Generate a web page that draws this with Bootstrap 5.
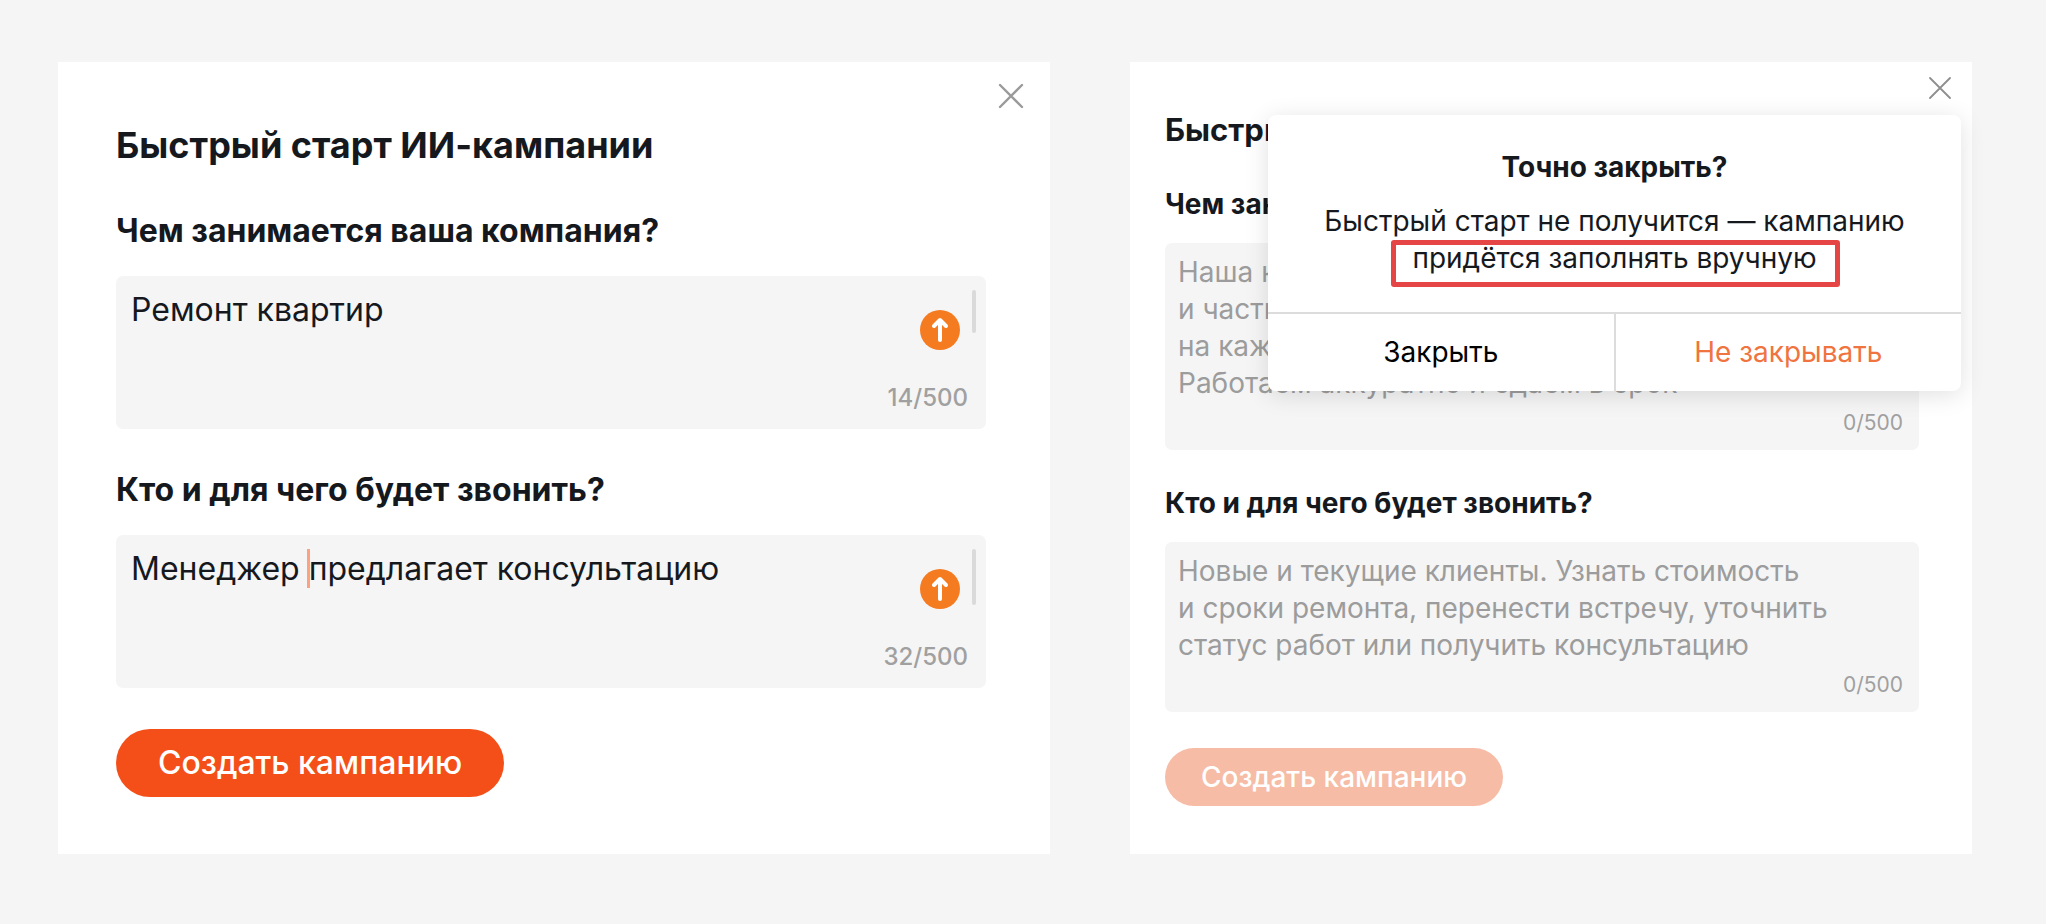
<!DOCTYPE html>
<html lang="ru">
<head>
<meta charset="utf-8">
<meta name="viewport" content="width=device-width, initial-scale=1">
<title>Быстрый старт ИИ-кампании</title>
<link href="https://cdn.jsdelivr.net/npm/bootstrap@5.3.0/dist/css/bootstrap.min.css" rel="stylesheet">
<style>
body { background: #f5f5f5; color: #15191e; font-family: Inter, "Noto Sans", sans-serif; }
.stage { display: grid; grid-template-columns: 992fr 842fr; gap: 80px; padding: 62px 74px 70px 58px; }
.panel { background: #fff; position: relative; }
.panel-lg { padding: 62px 64px 57px 58px; }
.panel-sm { padding: 50px 53px 48px 35px; }
.panel h1 { font-weight: 700; margin: 0; }
.panel-lg h1 { font-size: 36px; line-height: 42px; margin-bottom: 45px; }
.panel-sm h1 { font-size: 31px; line-height: 36px; margin-bottom: 39px; }
.field-label { display: block; font-weight: 700; }
.panel-lg .field-label { font-size: 32px; line-height: 40px; margin-bottom: 25px; }
.panel-sm .field-label { font-size: 28px; line-height: 34px; margin-bottom: 22px; }
.field-box { background: #f5f5f5; border-radius: 7px; position: relative; }
.panel-lg .field-box { padding: 14px 18px 16px 15px; margin-bottom: 41px; }
.panel-sm .field-box { padding: 11px 16px 14px 13px; margin-bottom: 36px; }
.field-box textarea { display: block; width: 100%; border: 0; padding: 0; background: none; resize: none; overflow: hidden; outline: 0; color: #15191e; }
.panel-lg textarea { font-size: 32px; line-height: 40px; }
.panel-sm textarea { font-size: 28px; line-height: 37px; }
.field-box textarea::placeholder { color: #9c9c9c; opacity: 1; }
.counter { color: #a0a0a0; text-align: right; }
.panel-lg .counter { font-size: 24px; line-height: 30px; margin-top: 13px; font-weight: 500; }
.panel-sm .counter { font-size: 21px; line-height: 26px; margin-top: 8px; }
.send { position: absolute; top: 34px; right: 26px; width: 40px; height: 40px; padding: 0; border: 0; background: none; }
.send svg, .close-x svg { display: block; }
.thumb { position: absolute; top: 14px; right: 10px; width: 4px; height: 43px; background: #dadada; border-radius: 2px; }
.thumb-tall { height: 56px; }
.caret { position: absolute; top: 14px; left: 191px; width: 3px; height: 39px; background: #fba283; }
.create { display: block; border: 0; color: #fff; font-weight: 500; border-radius: 40px; }
.panel-lg .create { background: #f44f18; font-size: 32px; line-height: 40px; padding: 14px 42px; }
.panel-sm .create { background: #f6bca6; font-size: 28px; line-height: 34px; padding: 12px 36px; }
.close-x { position: absolute; padding: 0; border: 0; background: none; }
.panel-lg .close-x { top: 21px; right: 26px; }
.panel-sm .close-x { top: 15px; right: 21px; }
.confirm { position: absolute; top: 53px; right: 11px; left: 138px; background: #fff; border-radius: 8px; box-shadow: 0 4px 24px rgba(0,0,0,.12); font-size: 28px; text-align: center; }
.confirm-text { padding: 34px 20px 26px; }
.confirm h2 { font-size: 28px; line-height: 36px; font-weight: 700; margin: 0 0 18px; }
.confirm p { line-height: 37px; margin: 0; padding-bottom: 9px; }
.framed { position: relative; display: inline-block; }
.framed::after { content: ""; position: absolute; inset: 0 -23px -10px -21px; border: 5px solid #e64545; border-radius: 3px; }
.confirm-actions { border-top: 2px solid #dcdcdc; }
.confirm-actions button { flex: 1 1 0; border: 0; background: none; line-height: 37px; padding: 20px 0; color: #000; }
.confirm-actions button + button { border-left: 2px solid #dcdcdc; color: #f07440; }
</style>
</head>
<body>
<main class="stage">
  <section class="panel panel-lg">
    <button type="button" class="close-x" aria-label="Закрыть">
      <svg width="26" height="26" viewBox="0 0 26 26" fill="none" stroke="#9a9a9a" stroke-width="2.4" stroke-linecap="round"><path d="M2 2L24 24M24 2L2 24"/></svg>
    </button>
    <h1>Быстрый старт ИИ-кампании</h1>
    <label class="field-label" for="biz">Чем занимается ваша компания?</label>
    <div class="field-box">
      <textarea id="biz" rows="2" spellcheck="false">Ремонт квартир</textarea>
      <div class="counter">14/500</div>
      <button type="button" class="send" aria-label="Отправить">
        <svg width="40" height="40" viewBox="0 0 40 40"><circle cx="20" cy="20" r="20" fill="#f57b20"/><path d="M20 30V10.500M14 16L20 10L26 16" fill="none" stroke="#fff" stroke-width="4" stroke-linecap="round" stroke-linejoin="round"/></svg>
      </button>
      <span class="thumb"></span>
    </div>
    <label class="field-label" for="who">Кто и для чего будет звонить?</label>
    <div class="field-box">
      <textarea id="who" rows="2" spellcheck="false">Менеджер предлагает консультацию</textarea>
      <span class="caret"></span>
      <div class="counter">32/500</div>
      <button type="button" class="send" aria-label="Отправить">
        <svg width="40" height="40" viewBox="0 0 40 40"><circle cx="20" cy="20" r="20" fill="#f57b20"/><path d="M20 30V10.500M14 16L20 10L26 16" fill="none" stroke="#fff" stroke-width="4" stroke-linecap="round" stroke-linejoin="round"/></svg>
      </button>
      <span class="thumb thumb-tall"></span>
    </div>
    <button type="button" class="create">Создать кампанию</button>
  </section>

  <section class="panel panel-sm">
    <button type="button" class="close-x" aria-label="Закрыть">
      <svg width="22" height="22" viewBox="0 0 22 22" fill="none" stroke="#8f8f8f" stroke-width="1.800" stroke-linecap="round"><path d="M1 1L21 21M21 1L1 21"/></svg>
    </button>
    <h1>Быстрый старт ИИ-кампании</h1>
    <label class="field-label" for="biz2">Чем занимается ваша компания?</label>
    <div class="field-box">
      <textarea id="biz2" rows="4" placeholder="Наша компания ремонтирует квартиры&#10;и частные дома. Даём гарантию&#10;на каждый вид работ.&#10;Работаем аккуратно и сдаём в срок"></textarea>
      <div class="counter">0/500</div>
    </div>
    <label class="field-label" for="who2">Кто и для чего будет звонить?</label>
    <div class="field-box">
      <textarea id="who2" rows="3" placeholder="Новые и текущие клиенты. Узнать стоимость&#10;и сроки ремонта, перенести встречу, уточнить&#10;статус работ или получить консультацию"></textarea>
      <div class="counter">0/500</div>
    </div>
    <button type="button" class="create" disabled>Создать кампанию</button>

    <div class="confirm" role="dialog" aria-labelledby="confirm-title">
      <div class="confirm-text">
        <h2 id="confirm-title">Точно закрыть?</h2>
        <p>Быстрый старт не получится — кампанию<br><span class="framed">придётся заполнять вручную</span></p>
      </div>
      <div class="confirm-actions d-flex">
        <button type="button">Закрыть</button>
        <button type="button">Не закрывать</button>
      </div>
    </div>
  </section>
</main>
<script src="https://cdn.jsdelivr.net/npm/bootstrap@5.3.0/dist/js/bootstrap.bundle.min.js"></script>
</body>
</html>
